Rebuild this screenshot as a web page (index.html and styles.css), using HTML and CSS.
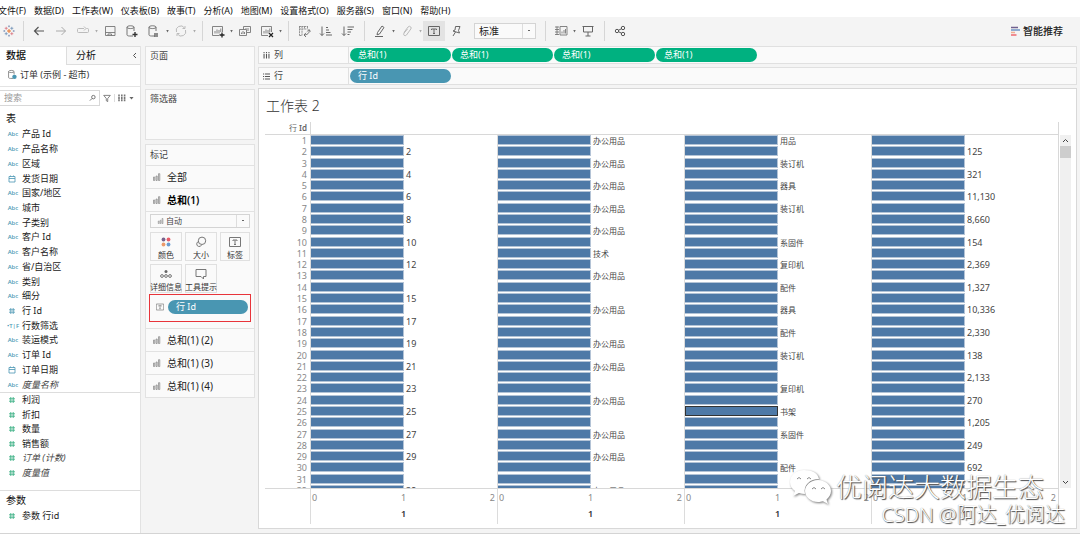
FILE: index.html
```html
<!DOCTYPE html>
<html lang="zh-CN">
<head>
<meta charset="utf-8">
<title>工作表 2</title>
<link rel="stylesheet" href="styles.css">
</head>
<body>
<svg class="defs" aria-hidden="true">
  <symbol id="bars" viewBox="0 0 8 8"><path d="M1 4h1.200v3.500H1zM3.500 3h1.200v4.500H3.500zM6 .7h1.300v6.800H6z" fill="#ddd" stroke="#888" stroke-width=".7"/></symbol>
  <symbol id="tbox" viewBox="0 0 12 11"><path d="M.5 1h11v9H.5zM4 4.500V3.500h4v1M6 3.500v4.500M5 8h2" fill="none" stroke="currentColor"/></symbol>
  <symbol id="cal" viewBox="0 0 8 8"><path d="M1 1.500h6v5.500H1zM1 3.500h6M2.500.5v1M5.500.5v1" fill="none" stroke="#4996b2" stroke-width=".8"/></symbol>
  <symbol id="hash" viewBox="0 0 8 8"><path d="M2.800 1v6M5.200 1v6M1 2.800h6M1 5.200h6" fill="none" stroke="currentColor" stroke-width=".8"/></symbol>
  <symbol id="db" viewBox="0 0 14 14"><path d="M8 12H4.500C3 12 2 11.500 2 10.800V3.200C2 1.300 9 1.300 9 3.200V7M2 3.200C2 5 9 5 9 3.200" fill="none" stroke="#666" stroke-width=".9"/></symbol>
</svg>

<nav class="menu">
  <a href="#">文件(F)</a><a href="#">数据(D)</a><a href="#">工作表(W)</a><a href="#">仪表板(B)</a><a href="#">故事(T)</a><a href="#">分析(A)</a><a href="#">地图(M)</a><a href="#">设置格式(O)</a><a href="#">服务器(S)</a><a href="#">窗口(N)</a><a href="#">帮助(H)</a>
</nav>

<div class="toolbar">
  <button class="tool logo" aria-label="起始页"><svg viewBox="0 0 12 12"><path d="M6 4v4M4 6h4" stroke="#e8762d"/><path d="M3.200 1.800v3M1.700 3.300h3M8.800 7.200v3M7.300 8.700h3" stroke="#d9737d" stroke-width=".8"/><path d="M8.800 1.800v3M7.300 3.300h3M3.200 7.200v3M1.700 8.700h3" stroke="#6f8fb5" stroke-width=".8"/><path d="M6 .3v2M5 1.300h2M6 9.700v2M5 10.700h2M1.300 5v2M.3 6h2M10.700 5v2M9.700 6h2" stroke="#7b8fb5" stroke-width=".7"/></svg></button>
  <i class="sep"></i>
  <button class="tool" aria-label="撤消"><svg viewBox="0 0 14 14"><path d="M12 7H2.500M6.500 3l-4 4 4 4" stroke="#555" stroke-width="1.200"/></svg></button>
  <button class="tool" aria-label="重做"><svg viewBox="0 0 14 14"><path d="M2 7h9.500M7.500 3l4 4-4 4" stroke="#aaa"/></svg></button>
  <button class="tool" aria-label="重播"><svg viewBox="0 0 14 14"><path d="M10.500 4.500h1q1 0 1 1v2q0 1-1 1h-9q-1 0-1-1v-2q0-1 1-1H8M8 2.500l2 2-2 2" stroke="#bbb"/></svg></button>
  <i class="caret pale"></i>
  <button class="tool" aria-label="保存"><svg viewBox="0 0 14 14"><path d="M2.500 2.500h9.500v9h-9.500zM2.500 8.500h9.500M5 11.500v-1.500h3.500v1.500" stroke="#777" stroke-width=".9"/></svg></button>
  <button class="tool" aria-label="新建数据源"><svg viewBox="0 0 14 14"><use href="#db"/><path d="M10 8v5M7.500 10.500h5" stroke="#333" stroke-width="1.400"/></svg></button>
  <button class="tool" aria-label="暂停更新"><svg viewBox="0 0 14 14"><use href="#db"/><path d="M8 9v4M10 9v4" stroke="#555" stroke-width="1.300"/></svg></button>
  <i class="caret"></i>
  <button class="tool" aria-label="运行更新"><svg viewBox="0 0 14 14"><path d="M2.500 8A4.500 4.500 0 0 1 10.500 4M11.500 6A4.500 4.500 0 0 1 3.500 10M8.500 4.500h2.500V2M5.500 9.500H3V12" stroke="#bbb"/></svg></button>
  <i class="caret pale"></i>
  <i class="sep"></i>
  <button class="tool" aria-label="新建工作表"><svg viewBox="0 0 14 14"><path d="M8 11.500H1.500v-9h10V8M4 9.500V7M6 9.500v-4M8 9.500V6M9.800 8V4.500" stroke="#777" stroke-width=".9"/><path d="M11 8.500v5M8.500 11h5" stroke="#222" stroke-width="1.300"/></svg></button>
  <i class="caret"></i>
  <button class="tool" aria-label="复制工作表"><svg viewBox="0 0 14 14"><path d="M5.500 5.500V2.500h7v6H9M1.500 5.500h7v6h-7zM3.500 10V8.500M5 10V7M6.500 10V8M8 5V4M10 7V4" stroke="#777" stroke-width=".9"/></svg></button>
  <button class="tool" aria-label="清除工作表"><svg viewBox="0 0 14 14"><path d="M8 11.500H1.500v-9h10V8M4 9.500V7M6 9.500v-4M8 9.500V6M9.800 8V4.500" stroke="#777" stroke-width=".9"/><path d="M9 9l4 4M13 9l-4 4" stroke="#222" stroke-width="1.200"/></svg></button>
  <i class="caret"></i>
  <i class="sep"></i>
  <button class="tool" aria-label="交换行和列"><svg viewBox="0 0 14 14"><path d="M2 2.500h8.500M2 5h8.500M2.500 2v9.500M5 2v3M7.500 2v3M10.500 2v3M2.500 11.500H5V5" stroke="#888" stroke-width=".9" stroke-dasharray="2 .6"/><path d="M12 6c1 3-2 5-5 5M9 8.800L7 11l2 2M10.300 7.500L12 5.500l1.500 2" stroke="#666" stroke-width=".9"/></svg></button>
  <button class="tool" aria-label="升序排序"><svg viewBox="0 0 14 14"><path d="M3 2.500v9M1 9.500l2 2 2-2M7 3.500h2M7 6h3M7 8.500h4.500M7 11h6" stroke="#666"/></svg></button>
  <button class="tool" aria-label="降序排序"><svg viewBox="0 0 14 14"><path d="M3 2.500v9M1 9.500l2 2 2-2M6.500 3h6.500M6.500 5.500h5M6.500 8h3.500M6.500 10.500h2" stroke="#666"/></svg></button>
  <i class="sep"></i>
  <button class="tool" aria-label="突出显示"><svg viewBox="0 0 14 14"><path d="M4.500 8.500L9 2l2 1.500L6.500 10l-2.500.8zM2 12.500h8" stroke="#666"/></svg></button>
  <i class="caret"></i>
  <button class="tool" aria-label="分组成员"><svg viewBox="0 0 14 14"><path d="M4 8.500L8 3q1.500-1.500 2.800 0 .8 1 0 2L6.500 11q-1.300 1.200-2.400.3-1-1 0-2.300L7.500 5" stroke="#bbb"/></svg></button>
  <i class="caret pale"></i>
  <button class="tool on" aria-label="显示标记标签"><svg viewBox="0 0 14 14"><path d="M1.500 2.500h11v9h-11zM4.500 6V5h5v1M7 5v4.500M6 9.500h2" stroke="#666"/></svg></button>
  <button class="tool" aria-label="固定轴"><svg viewBox="0 0 14 14"><path d="M6.500 2.500h4.500L9.500 6.500l1 2.500-6.500-2 2-1zM6.500 8L4 12" stroke="#666"/></svg></button>
  <select class="fit" aria-label="适合"><option>标准</option></select>
  <i class="sep"></i>
  <button class="tool" aria-label="显示隐藏卡"><svg viewBox="0 0 14 14"><path d="M1 3h4M1 5.500h4M1 8h4M1 10.500h4M3 2.500v8.500M6 2.500h7v8.500H6zM8 9.500V7.500M10 9.500V6M11.500 9.500V5" stroke="#777" stroke-width=".9"/></svg></button>
  <i class="caret"></i>
  <button class="tool" aria-label="演示模式"><svg viewBox="0 0 14 14"><path d="M1.500 2.500h11M2.500 2.500v5.500h9V2.500M7 8v4M4.500 12h5" stroke="#666"/></svg></button>
  <i class="sep"></i>
  <button class="tool" aria-label="共享"><svg viewBox="0 0 14 14"><circle cx="4" cy="7" r="1.700" stroke="#555"/><circle cx="10" cy="4" r="1.700" stroke="#555"/><circle cx="10" cy="10" r="1.700" stroke="#555"/><path d="M5.500 6.300L8.500 4.700M5.500 7.700l3 1.500" stroke="#555"/></svg></button>
  <button class="showme"><svg viewBox="0 0 9 10"><path d="M0 1.500h7" stroke="#70608f" stroke-width="1.500"/><path d="M0 4h9" stroke="#6f94c4" stroke-width="1.500"/><path d="M0 6.500h4" stroke="#f0b093" stroke-width="1.500"/><path d="M0 9h5.500" stroke="#ee6a72" stroke-width="1.500"/></svg>智能推荐</button>
</div>

<main class="work">
  <aside class="data">
    <div class="tabs"><button class="tab active">数据</button><button class="tab">分析<svg viewBox="0 0 5 7"><path d="M4 1L1.500 3.500 4 6" fill="none" stroke="#555"/></svg></button></div>
    <div class="source"><svg viewBox="0 0 14 14"><use href="#db"/><circle cx="9.500" cy="10" r="2.800" fill="#4996b2"/></svg>订单 (示例 - 超市)</div>
    <div class="find">
      <label class="search"><input type="text" placeholder="搜索" aria-label="搜索"><svg viewBox="0 0 8 8"><circle cx="5" cy="3" r="2" fill="none" stroke="#666"/><path d="M3.500 4.500L1 7" stroke="#666"/></svg></label>
      <svg class="funnel" viewBox="0 0 9 9"><path d="M.8 1h7.400L5.300 4.500V8L3.700 7V4.500z" fill="none" stroke="#666" stroke-width=".9"/></svg>
      <svg class="view" viewBox="0 0 8 8"><path d="M1 .5v7M3.800.5v7M6.600.5v7" stroke="#777" stroke-width="1.600" stroke-dasharray="2 .4"/></svg>
      <i class="caret big"></i>
    </div>
    <h2>表</h2>
    <ul class="fields dims">
      <li><b>Abc</b>产品 Id</li><li><b>Abc</b>产品名称</li><li><b>Abc</b>区域</li>
      <li><svg><use href="#cal"/></svg>发货日期</li>
      <li><b>Abc</b>国家/地区</li><li><b>Abc</b>城市</li><li><b>Abc</b>子类别</li><li><b>Abc</b>客户 Id</li><li><b>Abc</b>客户名称</li><li><b>Abc</b>省/自治区</li><li><b>Abc</b>类别</li><li><b>Abc</b>细分</li>
      <li><svg><use href="#hash"/></svg>行 Id</li>
      <li><b>•T|F</b>行数筛选</li><li><b>Abc</b>装运模式</li><li><b>Abc</b>订单 Id</li>
      <li><svg><use href="#cal"/></svg>订单日期</li>
      <li class="auto"><b>Abc</b>度量名称</li>
    </ul>
    <ul class="fields meas">
      <li><svg><use href="#hash"/></svg>利润</li><li><svg><use href="#hash"/></svg>折扣</li><li><svg><use href="#hash"/></svg>数量</li><li><svg><use href="#hash"/></svg>销售额</li>
      <li class="auto"><svg><use href="#hash"/></svg>订单 (计数)</li><li class="auto"><svg><use href="#hash"/></svg>度量值</li>
    </ul>
    <section class="params">
      <h2>参数</h2>
      <ul class="fields green"><li><svg><use href="#hash"/></svg>参数 行id</li></ul>
    </section>
  </aside>

  <aside class="cards">
    <section class="card pages">页面</section>
    <section class="card filters">筛选器</section>
    <section class="marks">
      <div class="cap">标记</div>
      <button class="mark"><svg><use href="#bars"/></svg>全部</button>
      <button class="mark current"><svg><use href="#bars"/></svg>总和(1)</button>
      <div class="detail">
        <div class="kind"><svg><use href="#bars"/></svg><select aria-label="标记类型"><option>自动</option></select></div>
        <div class="props">
          <button><svg viewBox="0 0 12 12"><circle cx="3.500" cy="3.500" r="1.900" fill="#79628c"/><circle cx="8.500" cy="3.500" r="1.900" fill="#e95c68"/><circle cx="3.500" cy="8.500" r="1.900" fill="#ec9a6b"/><circle cx="8.500" cy="8.500" r="1.900" fill="#6b9bd0"/></svg>颜色</button>
          <button><svg viewBox="0 0 12 12"><circle cx="7" cy="4.800" r="3.700" fill="none" stroke="#777"/><path d="M4 5.500A2.500 2.500 0 1 0 6.500 9" fill="none" stroke="#777"/></svg>大小</button>
          <button><svg><use href="#tbox"/></svg>标签</button>
          <button><svg viewBox="0 0 12 12"><circle cx="6" cy="3.500" r="1.500" fill="#666"/><g fill="none" stroke="#666" stroke-width=".9"><circle cx="2" cy="8" r="1.400"/><circle cx="6" cy="8" r="1.400"/><circle cx="10" cy="8" r="1.400"/></g></svg>详细信息</button>
          <button><svg viewBox="0 0 12 12"><path d="M1 1.500h10V8.500H8.500V11L6 8.500H1z" fill="none" stroke="#777"/></svg>工具提示</button>
        </div>
        <div class="marked"><svg><use href="#tbox"/></svg><button class="pill blue">行 Id</button></div>
      </div>
      <button class="mark"><svg><use href="#bars"/></svg>总和(1) (2)</button>
      <button class="mark"><svg><use href="#bars"/></svg>总和(1) (3)</button>
      <button class="mark"><svg><use href="#bars"/></svg>总和(1) (4)</button>
    </section>
  </aside>

  <div class="canvas">
    <div class="shelf"><span class="name"><svg viewBox="0 0 8 8"><path d="M1.200 0v1.300M4 0v1.300M6.800 0v1.300M1.200 2.300V7.500M4 2.300V7.500M6.800 2.300V7.500" stroke="#555" stroke-width="1.200"/></svg>列</span><button class="pill">总和(1)</button><button class="pill">总和(1)</button><button class="pill">总和(1)</button><button class="pill">总和(1)</button></div>
    <div class="shelf"><span class="name"><svg viewBox="0 0 8 8"><path d="M0 1.200h1.300M0 4h1.300M0 6.800h1.300M2.300 1.200H8M2.300 4H8M2.300 6.800H8" stroke="#555" stroke-width="1.200"/></svg>行</span><button class="pill blue">行 Id</button></div>
    <section class="sheet">
      <h1>工作表 2</h1>
      <div class="plot">
        <div class="viz">
          <div class="head"><span>行 <b>Id</b></span></div>
          <div class="rows" id="rows"></div>
          <div class="axes">
            <div></div>
            <div class="axis"><span>0</span><span>1</span><span>2</span><b>1</b></div>
            <div class="axis"><span>0</span><span>1</span><span>2</span><b>1</b></div>
            <div class="axis"><span>0</span><span>1</span><span>2</span><b>1</b></div>
            <div class="axis"><span>0</span><span>1</span><span>2</span><b>1</b></div>
          </div>
        </div>
        <div class="scroll"><svg viewBox="0 0 7 5"><path d="M1 4l2.500-2.500L6 4" /></svg><i></i><svg viewBox="0 0 7 5"><path d="M1 1l2.500 2.500L6 1"/></svg></div>
      </div>
      <div class="watermark">
        <div class="brand"><svg viewBox="0 0 44 38"><path d="M16 2C8 2 2 7 2 14c0 4 2 7 5 9l-2 5 6-3c2 .6 4 1 6 1-2-9 5-15 14-15C30 5 24 2 16 2z"/><path d="M30 12c-7 0-13 5-13 11s6 11 13 11c2 0 3-.3 5-.8l5 2.800-1.500-4.500C41 29.500 43 26.500 43 23c0-6-6-11-13-11z"/><path class="eyes" d="M9 11q2-3 4 0M19 11q2-3 4 0M24 21q2-3 4 0M33 21q2-3 4 0"/></svg>优阅达大数据生态</div>
        <div class="credit">CSDN @阿达_优阅达</div>
      </div>
    </section>
  </div>
</main>
<script src="chart.js"></script>
</body>
</html>
```
FILE: styles.css
```css
* { box-sizing: border-box; }
body {
  margin: 0;
  height: 100vh;
  display: flex;
  flex-direction: column;
  overflow: hidden;
  background: #f4f4f4;
  border-bottom: 1px solid #d4d4d4;
  color: #222;
  font: 9px/12px "Noto Sans", "Noto Sans CJK SC", sans-serif;
}
button, input, select { font: inherit; color: inherit; border: 0; padding: 0; margin: 0; background: none; appearance: none; border-radius: 0; }
h1, h2, ul { margin: 0; padding: 0; font-weight: 400; list-style: none; }
svg { display: block; flex: none; }
.defs { position: absolute; width: 0; height: 0; }

.menu { display: flex; gap: 8px; height: 17px; align-items: center; padding-top: 4px; background: #fff; white-space: nowrap; }
.menu a { color: #111; text-decoration: none; }
.menu a:first-child { margin-left: -2px; }

.toolbar { display: flex; align-items: center; height: 29px; padding-bottom: 1px; flex: none; }
.tool { width: 22px; height: 20px; display: flex; align-items: center; justify-content: center; flex: none; }
.tool svg { width: 14px; height: 14px; fill: none; }
.logo { width: 18px; }
.logo svg { width: 12px; height: 12px; }
.on { background: #e3e3e3; }
.sep { width: 1px; height: 20px; margin: 0 4px 0 5px; background: #d6d6d6; flex: none; }
.caret { width: 5px; height: 3px; background: #666; clip-path: polygon(20% 0, 80% 0, 50% 100%); flex: none; }
.pale { background: #aaa; }
.big { clip-path: polygon(0 0, 100% 0, 50% 100%); }
.fit, .kind select {
  border: 1px solid #d4d4d4;
  background:
    conic-gradient(from -40deg at 50% 100%, #666 80deg, transparent 0) no-repeat right 4px center / 4px 2px,
    linear-gradient(#ddd, #ddd) no-repeat right 12px top / 1px 100%, #fafafa;
}
.fit { width: 62px; height: 16px; margin: 0 4px 0 7px; padding-left: 4px; font-size: 10px; }
.showme { margin-left: auto; margin-right: 17px; display: flex; align-items: center; gap: 3px; font-size: 10px; font-weight: 500; }
.showme svg { width: 9px; height: 10px; }

.work { flex: 1; min-height: 0; display: flex; gap: 4px; padding-right: 3px; }

.data { width: 141px; flex: none; background: #fff; border-right: 1px solid #e2e2e2; display: flex; flex-direction: column; }
.tabs { display: flex; height: 19px; font-size: 10px; }
.tab { flex: 1; display: flex; align-items: center; padding: 0 3px 1px 9px; border: solid #ddd; border-width: 1px 0 1px 1px; background: #f8f8f8; color: #111; }
.tab.active { border-color: #e4e4e4 #fff #fff; border-left: 0; padding-left: 6px; background: #fff; font-weight: 500; flex: 0 0 66px; }
.tab svg { width: 5px; height: 7px; margin-left: auto; }
.source { display: flex; align-items: center; gap: 2px; height: 22px; padding: 0 0 2px 7px; border-bottom: 1px solid #e4e4e4; white-space: nowrap; color: #333; }
.source svg { width: 11px; height: 11px; }
.find { display: flex; align-items: center; gap: 3px; padding-top: 3px; }
.search { width: 100px; height: 16px; display: flex; align-items: center; border: 1px solid #d8d8d8; border-left: 0; padding: 0 3px 0 4px; }
.search input { flex: 1; min-width: 0; }
.search input::placeholder { color: #999; opacity: 1; }
.search svg { width: 7px; height: 8px; }
.funnel { width: 8px; height: 9px; }
.view { width: 12px; height: 8px; padding-left: 3px; border-left: 1px solid #ddd; }
.data h2 { font-size: 10px; line-height: 14px; padding-left: 6px; color: #111; }
.find + h2 { padding-top: 5px; }
.fields { display: grid; grid-auto-rows: 1fr; align-items: center; color: #222; }
.fields li { display: flex; align-items: center; white-space: nowrap; padding-left: 4px; }
.fields b { width: 18px; padding: 0 3px; color: #4996b2; font-size: 6px; font-weight: 500; display: flex; justify-content: center; }
.fields svg { width: 8px; height: 8px; margin: 0 6px 0 4px; }
.dims { height: 265px; margin-top: 2px; }
.dims svg { color: #4996b2; }
.meas { height: 88px; border-top: 1px solid #ddd; }
.meas svg, .green svg { color: #2aa879; }
.fields .auto { font-style: italic; color: #444; }
.auto b { font-style: normal; }
.params { margin-top: 10px; border-top: 1px solid #ddd; padding-top: 2px; }
.params .fields { height: 15px; margin-top: 1px; }

.cards { width: 110px; flex: none; display: flex; flex-direction: column; gap: 4px; color: #444; }
.card, .marks { background: #fafafa; border: 1px solid #e2e2e2; }
.card { padding: 3px 4px; }
.pages { height: 39px; }
.filters { height: 51px; }
.cap { height: 20px; padding: 4px; }
.mark { display: flex; align-items: center; width: 100%; height: 23px; padding: 0 0 1px 6px; gap: 6px; font-size: 10px; border-top: 1px solid #e2e2e2; color: #222; }
.mark svg { width: 9px; height: 8px; }
.current { font-weight: 600; color: #000; }
.detail { border-top: 1px solid #e2e2e2; padding: 2px 3px 6px; }
.kind { display: flex; position: relative; margin: 0 1px; font-size: 8px; }
.kind svg { position: absolute; left: 7px; top: 4px; width: 7px; height: 6px; }
.kind select { width: 100%; height: 14px; padding-left: 15px; color: #444; }
.props { display: grid; grid-template-columns: 32px 32px 30px; justify-content: space-between; gap: 3px; margin: 4px 1px 0; }
.props button { height: 29px; border: 1px solid #e0e0e0; display: flex; flex-direction: column; align-items: center; justify-content: space-between; padding-top: 3px; font-size: 8px; line-height: 11px; color: #333; white-space: nowrap; }
.props svg { width: 12px; height: 12px; color: #777; }
.marked { display: flex; align-items: flex-start; gap: 4px; height: 28px; margin-top: 1px; padding: 5px 2px 0 6px; border: 1px solid #e8343a; }
.marked svg { width: 8px; height: 8px; margin-top: 3px; color: #777; }
.marked .pill { width: auto; flex: 1; }

.canvas { flex: 1; min-width: 0; display: flex; flex-direction: column; gap: 3px; margin-left: -1px; padding-bottom: 4px; }
.shelf { display: flex; align-items: center; gap: 1px; height: 18px; flex: none; border: 1px solid #e0e0e0; background: #fafafa; }
.name { width: 90px; height: 100%; display: flex; align-items: center; gap: 4px; padding-left: 4px; border-right: 1px solid #e0e0e0; color: #444; }
.name svg { width: 7px; height: 7px; }
.pill { width: 101px; height: 14px; padding-left: 8px; border-radius: 7px; text-align: left; color: #fff; background: #00b180; line-height: 14px; }
.blue { background: #4996b2; }

.sheet { flex: 1; min-height: 0; position: relative; display: flex; flex-direction: column; background: #fff; border: 1px solid #d8d8d8; padding: 7px 5px 4px 6px; }
.sheet h1 { font-size: 14px; line-height: 20px; font-weight: 300; color: #333; padding-left: 1px; }
.plot { flex: 1; min-height: 0; display: flex; gap: 1px; margin-top: 6px; }
.viz { flex: 1; display: flex; flex-direction: column; border-right: 1px solid #d8d8d8; }
.head { height: 13px; border-bottom: 1px solid #d8d8d8; color: #666; font-size: 8px; }
.head span { display: block; width: 46px; height: 100%; padding-right: 3px; text-align: right; border-right: 1px solid #d8d8d8; }
.head b { font-weight: 600; }
.rows { flex: 1; min-height: 0; display: grid; grid-template-rows: repeat(31, 1fr) 3px; overflow: hidden; }
.row, .axes { display: grid; grid-template-columns: 45px repeat(4, 1fr); min-height: 0; }
.row .id { text-align: right; padding-right: 3px; color: #888; line-height: 11px; }
.pane { display: flex; border-left: 1px solid #dcdcdc; color: #444; line-height: 11px; min-width: 0; }
.bar { width: 50%; height: 10px; flex: none; background: #4e79a7; border: solid #b3c3d6; border-width: 1px 1px 1px 0; }
.bar.picked { border: 1px solid #333; }
.pane span { padding-left: 2px; white-space: nowrap; }
.pane .cjk { font-size: 8px; line-height: 12px; }
.axes { height: 36px; border-top: 1px solid #d8d8d8; color: #888; flex: none; }
.axis { display: grid; grid-template-columns: 1fr auto 1fr; align-content: start; row-gap: 4px; padding: 3px 2px 0 1px; border-left: 1px solid #dcdcdc; }
.axis span:nth-child(3) { text-align: right; }
.axis b { grid-column: 2; color: #333; font-weight: 600; }
.scroll { width: 11px; margin: 13px 0 36px; display: flex; flex-direction: column; align-items: center; background: #f0f0f0; padding: 3px 0; }
.scroll svg { width: 7px; height: 5px; fill: none; stroke: #444; }
.scroll i { width: 100%; height: 12px; margin: 3px 0 auto; background: #cdcdcd; }

.watermark { position: absolute; right: 11px; bottom: 0; text-align: right; color: #fff; text-shadow: 1px 1px 1px #444, 0 0 1px #888; font-weight: 300; white-space: nowrap; }
.brand { display: flex; align-items: center; gap: 4px; margin-right: 21px; font-size: 26px; line-height: 30px; }
.brand svg { width: 44px; height: 38px; fill: #fff; filter: drop-shadow(1px 1px 1px #777); margin: -4px 0; }
.brand .eyes { fill: none; stroke: #888; }
.credit { font-size: 20px; line-height: 26px; }
```
FILE: chart.js
```js
const goods = '办公用品';
const labels = [
  Object.fromEntries([2, 4, 6, 8, 10, 12, 15, 17, 19, 21, 23, 25, 27, 29, 32].map(n => [n, String(n)])),
  { 1: goods, 3: goods, 5: goods, 7: goods, 9: goods, 11: '技术', 13: goods, 16: goods, 19: goods, 21: goods, 24: goods, 27: goods, 29: goods, 32: goods },
  { 1: '用品', 3: '装订机', 5: '器具', 7: '装订机', 10: '系固件', 12: '复印机', 14: '配件', 16: '器具', 18: '配件', 20: '装订机', 23: '复印机', 25: '书架', 27: '系固件', 30: '配件' },
  { 2: '125', 4: '321', 6: '11,130', 8: '8,660', 10: '154', 12: '2,369', 14: '1,327', 16: '10,336', 18: '2,330', 20: '138', 22: '2,133', 24: '270', 26: '1,205', 28: '249', 30: '692' }
];

const rows = document.getElementById('rows');
for (let n = 1; n <= 32; n++) {
  const row = document.createElement('div');
  row.className = 'row';
  row.innerHTML = `<div class="id">${n}</div>` + labels.map((set, col) => {
    const picked = n === 25 && col === 2 ? ' picked' : '';
    const kind = col === 1 || col === 2 ? ' class="cjk"' : '';
    const text = set[n] ? `<span${kind}>${set[n]}</span>` : '';
    return `<div class="pane"><div class="bar${picked}"></div>${text}</div>`;
  }).join('');
  rows.append(row);
}
```
